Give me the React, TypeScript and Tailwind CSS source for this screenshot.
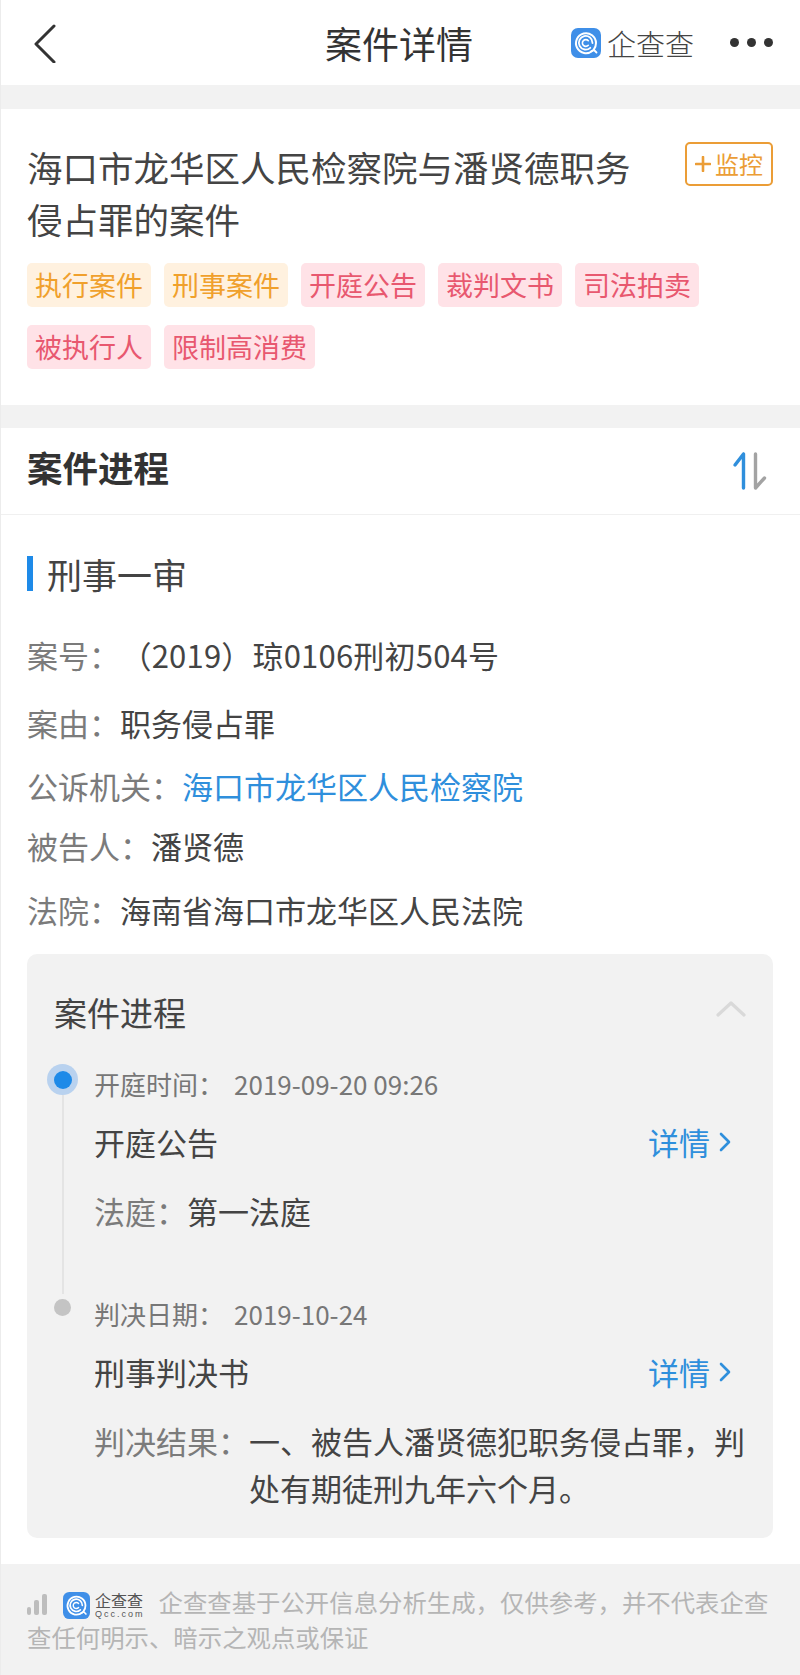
import React from "react";

const FONT = "font-['Noto_Sans_CJK_SC','Noto_Sans',sans-serif]";

function QccMark({ size }: { size: number }) {
  return (
    <svg width={size} height={size} viewBox="0 0 30 30" className="shrink-0">
      <rect width="30" height="30" rx="7" fill="#3f8fe8" />
      <path d="M21.5 22.8A10 10 0 1 1 25 15c0 2.600-.9 5-2.400 6.800" fill="none" stroke="#fff" strokeWidth="2" strokeLinecap="round" />
      <path d="M19.300 19.800A6.800 6.800 0 1 1 21.500 15" fill="none" stroke="#fff" strokeWidth="1.800" strokeLinecap="round" />
      <path d="M17.300 12.700A3.400 3.400 0 1 0 17.300 17.300" fill="none" stroke="#fff" strokeWidth="1.600" strokeLinecap="round" />
      <path d="M20 23.500l3-1.500 2.500 2.500" fill="none" stroke="#fff" strokeWidth="1.800" strokeLinecap="round" strokeLinejoin="round" />
    </svg>
  );
}

function Tag({ label, tone }: { label: string; tone: "orange" | "red" }) {
  const cls =
    tone === "orange" ? "bg-[#fff1df] text-[#f0a02c]" : "bg-[#ffe2e7] text-[#e8586f]";
  return (
    <span className={`h-[44px] px-[8px] rounded-[5px] text-[27px] leading-[44px] ${cls}`}>{label}</span>
  );
}

function Row({ className, label, children }: { className: string; label: string; children: React.ReactNode }) {
  return (
    <div className={`text-[31px] leading-[40px] text-[#444] whitespace-nowrap ${className}`}>
      <span className="text-[#7b7b7b]">{label}</span>
      {children}
    </div>
  );
}

function Detail() {
  return (
    <span className="flex items-center text-[#2f8fdc]">
      详情
      <svg width="12" height="20" viewBox="0 0 12 20" className="ml-[9px]">
        <path d="M2 2l8 8-8 8" fill="none" stroke="#2f8fdc" strokeWidth="2.600" strokeLinecap="round" strokeLinejoin="round" />
      </svg>
    </span>
  );
}

export default function App() {
  return (
    <div className={`w-[800px] h-[1675px] overflow-hidden bg-white border-l border-[#ececec] ${FONT}`}>
      <header className="h-[85px] grid grid-cols-[1fr_auto_1fr] items-center pl-[32px] pr-[27px]">
        <svg width="24" height="40" viewBox="0 0 24 40">
          <path d="M21 3L3 21l18 18" fill="none" stroke="#333" strokeWidth="3" strokeLinecap="round" strokeLinejoin="round" />
        </svg>
        <h1 className="text-[37px] leading-[50px] text-[#333] ml-[-8px]">案件详情</h1>
        <div className="flex items-center justify-end">
          <QccMark size={30} />
          <span className="ml-[6px] text-[29px] leading-[40px] font-light text-[#444]">企查查</span>
          <span className="ml-[36px] flex gap-[8px]">
            <i className="block w-[9px] h-[9px] rounded-full bg-[#333]" />
            <i className="block w-[9px] h-[9px] rounded-full bg-[#333]" />
            <i className="block w-[9px] h-[9px] rounded-full bg-[#333]" />
          </span>
        </div>
      </header>
      <div className="h-[24px] bg-[#f2f2f2]" />

      <section className="h-[296px] pl-[26px] pr-[27px] pt-[33px]">
        <div className="flex justify-between items-start">
          <h2 className="w-[620px] text-[35.500px] leading-[52px] text-[#444] font-normal -mt-[1px] mb-[1px]">
            海口市龙华区人民检察院与潘贤德职务侵占罪的案件
          </h2>
          <button className="w-[88px] h-[44px] border-2 border-[#eb9d36] rounded-[5px] flex items-center justify-center text-[24px] leading-none text-[#eb9d36]">
            <svg width="16" height="16" viewBox="0 0 16 16" className="mr-[4px]">
              <path d="M8 1v14M1 8h14" stroke="#eb9d36" strokeWidth="2.600" strokeLinecap="round" />
            </svg>
            监控
          </button>
        </div>
        <div className="mt-[17px] flex flex-wrap gap-x-[13px] gap-y-[18px]">
          <Tag label="执行案件" tone="orange" />
          <Tag label="刑事案件" tone="orange" />
          <Tag label="开庭公告" tone="red" />
          <Tag label="裁判文书" tone="red" />
          <Tag label="司法拍卖" tone="red" />
          <Tag label="被执行人" tone="red" />
          <Tag label="限制高消费" tone="red" />
        </div>
      </section>
      <div className="h-[23px] bg-[#f2f2f2]" />

      <section className="h-[87px] pl-[26px] pr-[27px] flex items-center justify-between border-b border-[#f0f0f0]">
        <h2 className="text-[35.500px] leading-[50px] font-bold text-[#333] -translate-y-[4px]">案件进程</h2>
        <svg width="40" height="42" viewBox="0 0 40 42" className="mr-[3px]">
          <path d="M13.500 4v34M13.500 4L5 15" fill="none" stroke="#2f8fdc" strokeWidth="3.400" strokeLinecap="round" strokeLinejoin="round" />
          <path d="M25.500 4v34l9-10" fill="none" stroke="#a3a3a3" strokeWidth="3.400" strokeLinecap="round" strokeLinejoin="round" />
        </svg>
      </section>

      <section className="h-[1049px] pl-[26px] pr-[27px] pt-[41px]">
        <div className="h-[35px] flex items-center border-l-[6px] border-[#1e8ae8] pl-[14px] text-[35px] leading-[35px] text-[#444]">
          刑事一审
        </div>
        <Row className="mt-[44px]" label="案号：">
          <span className="ml-[16px] tracking-[0.2px]">（2019）琼0106刑初504号</span>
        </Row>
        <Row className="mt-[28px]" label="案由：">职务侵占罪</Row>
        <Row className="mt-[23px]" label="公诉机关：">
          <span className="text-[#2f8fdc]">海口市龙华区人民检察院</span>
        </Row>
        <Row className="mt-[20px]" label="被告人：">潘贤德</Row>
        <Row className="mt-[24px]" label="法院：">海南省海口市龙华区人民法院</Row>

        <div className="mt-[24px] h-[584px] rounded-[10px] bg-[#f2f2f2] pl-[20px] pr-[27px] pt-[38px]">
          <div className="flex items-center justify-between pl-[7px] text-[33px] leading-[40px] text-[#444]">
            案件进程
            <svg width="30" height="16" viewBox="0 0 30 16" className="mt-[-6px]">
              <path d="M2 14L15 2l13 12" fill="none" stroke="#d9d9d9" strokeWidth="3.200" strokeLinecap="round" strokeLinejoin="round" />
            </svg>
          </div>

          <div className="mt-[32px] flex gap-[16px]">
            <div className="w-[31px] flex flex-col items-center">
              <span className="w-[31px] h-[31px] shrink-0 rounded-full bg-[#b9d2ef] flex items-center justify-center">
                <span className="block w-[18px] h-[18px] rounded-full bg-[#1e8ae8]" />
              </span>
              <span className="block w-[2px] flex-1 bg-[#e4e4e4]" />
            </div>
            <div className="flex-1 h-[230px]">
              <div className="text-[26px] leading-[40px] text-[#777] whitespace-nowrap">
                开庭时间：<span className="ml-[10px]">2019-09-20 09:26</span>
              </div>
              <div className="mt-[18px] flex justify-between pr-[15px] text-[31px] leading-[40px] text-[#444]">
                开庭公告
                <Detail />
              </div>
              <Row className="mt-[29px]" label="法庭：">第一法庭</Row>
            </div>
          </div>

          <div className="flex gap-[16px]">
            <div className="w-[31px] flex justify-center pt-[5px]">
              <span className="block w-[17px] h-[17px] rounded-full bg-[#c4c4c4]" />
            </div>
            <div className="flex-1">
              <div className="text-[26px] leading-[40px] text-[#777] whitespace-nowrap">
                判决日期：<span className="ml-[10px]">2019-10-24</span>
              </div>
              <div className="mt-[18px] flex justify-between pr-[15px] text-[31px] leading-[40px] text-[#444]">
                刑事判决书
                <Detail />
              </div>
              <div className="mt-[25px] flex text-[31px] leading-[47px] text-[#444]">
                <span className="shrink-0 text-[#7b7b7b]">判决结果：</span>
                <span className="w-[500px] shrink-0">一、被告人潘贤德犯职务侵占罪，判处有期徒刑九年六个月。</span>
              </div>
            </div>
          </div>
        </div>
      </section>

      <footer className="h-[111px] bg-[#f2f2f2] px-[26px] pt-[20px] text-[24.400px] leading-[35px] text-[#b5b5b5]">
        <span className="inline-flex items-end gap-[3px] h-[21px] align-[-3px] mr-[16px]">
          <i className="block w-[4px] h-[8px] rounded-[2px] bg-[#bdbdbd]" />
          <i className="block w-[5px] h-[15px] rounded-[2px] bg-[#bdbdbd]" />
          <i className="block w-[5px] h-[21px] rounded-[2px] bg-[#bdbdbd]" />
        </span>
        <span className="inline-flex items-center h-[27px] align-[-7px] mr-[14px]">
          <QccMark size={27} />
          <span className="ml-[5px] flex flex-col text-[#555]">
            <span className="text-[16px] leading-[17px]">企查查</span>
            <span className="text-[9px] leading-[10px] tracking-[2px] font-['Liberation_Sans',sans-serif]">Qcc.com</span>
          </span>
        </span>
        企查查基于公开信息分析生成，仅供参考，并不代表企查查任何明示、暗示之观点或保证
      </footer>
    </div>
  );
}
